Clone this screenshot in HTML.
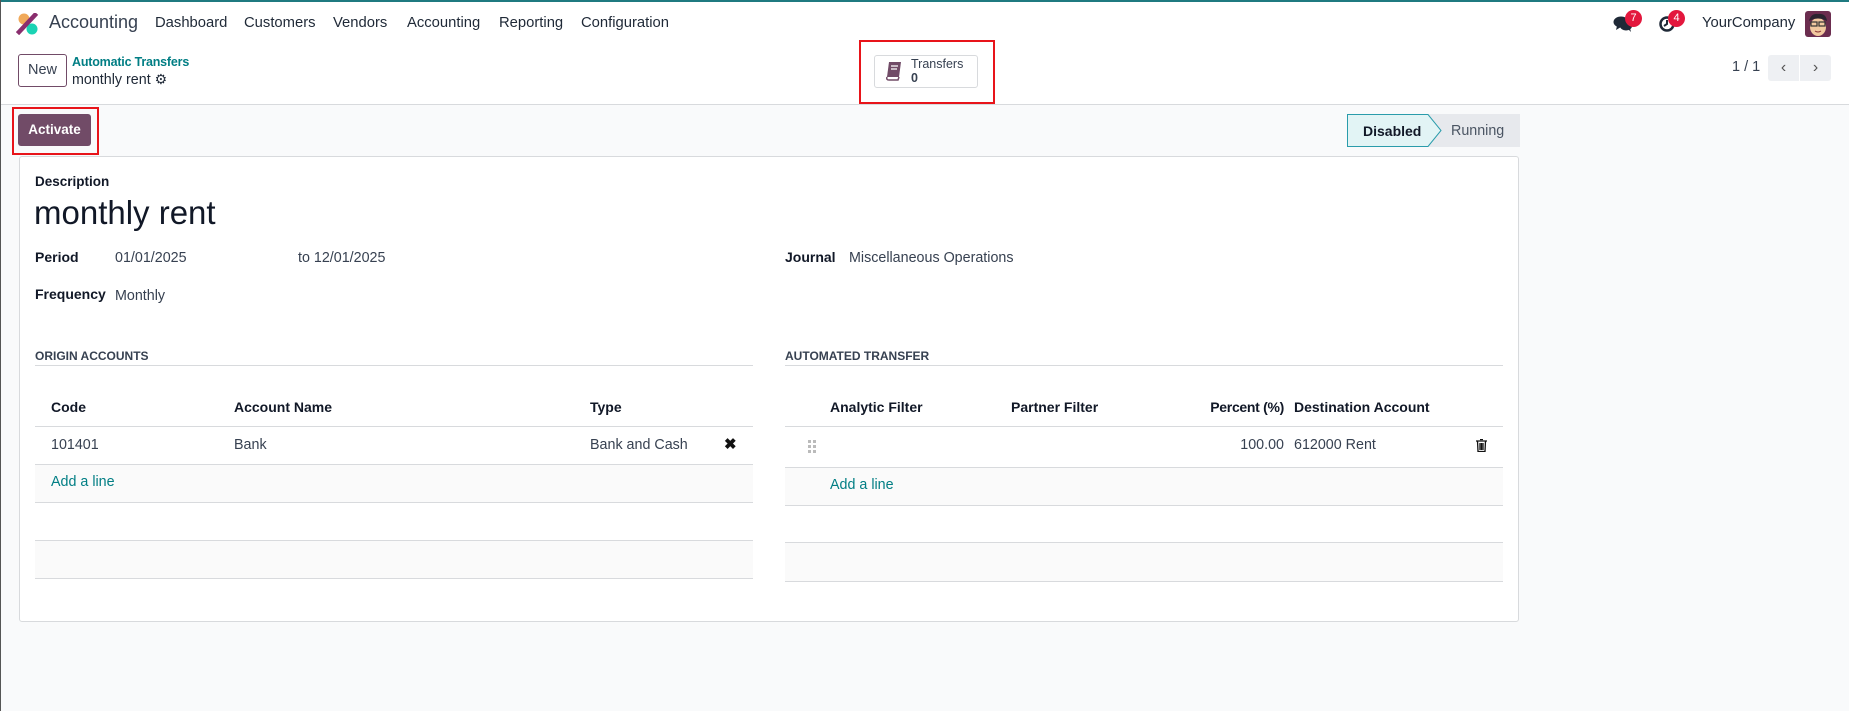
<!DOCTYPE html>
<html><head><meta charset="utf-8"><style>
*{box-sizing:border-box;margin:0;padding:0}
body{width:1849px;height:711px;overflow:hidden;background:#f9fafb;font-family:"Liberation Sans",sans-serif;color:#374151;position:relative;border-left:1px solid #555}
.a{position:absolute;white-space:nowrap}
.top{position:absolute;left:0;top:0;width:1849px;height:105px;background:#fff;border-top:2px solid #1f7a80;border-bottom:1px solid #d8dadd}
.nav{font-size:14.8px;color:#1f2937;top:15px}
.card{position:absolute;left:18px;top:156px;width:1500px;height:466px;background:#fff;border:1px solid #d8dadd;border-radius:3px}
.lbl{font-weight:bold;color:#111827;font-size:14px}
.val{font-size:14.3px;color:#374151}
.sec{font-weight:bold;font-size:12px;color:#374151}
.hl{position:absolute;height:1px;background:#d8dadd}
.th{font-weight:bold;font-size:14px;color:#111827}
.td{font-size:14.3px;color:#374151}
.add{font-size:14.3px;color:#017e84}
.band{position:absolute;background:#fafafa}
.badge{position:absolute;width:17px;height:17px;border-radius:50%;background:#e3173d;color:#fff;font-size:11px;text-align:center;line-height:17px}
</style></head><body>
<div class="top"></div>
<svg class="a" style="left:15px;top:13px" width="24" height="22" viewBox="0 0 24 22"><circle cx="8" cy="6" r="5.5" fill="#f0a95a"/><circle cx="16" cy="16" r="5.5" fill="#1ad3b4"/><path d="M3 19 L19 2" stroke="#8a2e6e" stroke-width="4.5" stroke-linecap="square"/></svg>
<div class="a" style="left:48px;top:12px;font-size:18px;color:#374151">Accounting</div>
<div class="a nav" style="left:154px">Dashboard</div>
<div class="a nav" style="left:243px">Customers</div>
<div class="a nav" style="left:332px">Vendors</div>
<div class="a nav" style="left:406px">Accounting</div>
<div class="a nav" style="left:498px">Reporting</div>
<div class="a nav" style="left:580px">Configuration</div>
<svg class="a" style="left:1612px;top:15px" width="20" height="18" viewBox="0 0 20 18"><ellipse cx="8" cy="7" rx="7.5" ry="5.5" fill="#1f2937"/><path d="M4 11 L3 15 L8 12Z" fill="#1f2937"/><ellipse cx="13" cy="11" rx="6" ry="4.5" fill="#1f2937"/><path d="M15 14 L18 17 L17 13Z" fill="#1f2937"/></svg>
<div class="badge" style="left:1624px;top:10px">7</div>
<svg class="a" style="left:1657px;top:15px" width="18" height="18" viewBox="0 0 18 18"><circle cx="9" cy="9" r="6.5" fill="none" stroke="#1f2937" stroke-width="2.5"/><path d="M9 5 V9 L6 11" stroke="#1f2937" stroke-width="2" fill="none"/></svg>
<div class="badge" style="left:1667px;top:10px">4</div>
<div class="a" style="left:1701px;top:15px;font-size:14.8px;color:#1f2937">YourCompany</div>
<svg class="a" style="left:1804px;top:11px" width="26" height="26" viewBox="0 0 26 26"><rect width="26" height="26" rx="3" fill="#6b2d4f"/><ellipse cx="13" cy="16" rx="8" ry="9" fill="#f2c9a0"/><path d="M4 10 Q6 2 13 3 Q21 2 22 10 L20 9 Q13 6 6 9Z" fill="#2a2430"/><rect x="6" y="11" width="6" height="4" fill="none" stroke="#333" stroke-width="1.2"/><rect x="14" y="11" width="6" height="4" fill="none" stroke="#333" stroke-width="1.2"/><path d="M10 20 Q13 22 16 20" stroke="#833" fill="none"/></svg>
<div class="a" style="left:17px;top:54px;width:49px;height:33px;border:1px solid #714b67;border-radius:3px;font-size:14.5px;color:#374151;text-align:center;line-height:31px">New</div>
<div class="a" style="left:71px;top:55px;font-size:12.5px;font-weight:bold;color:#017e84;letter-spacing:-0.2px">Automatic Transfers</div>
<div class="a" style="left:71px;top:71px;font-size:14.3px;color:#1f2937">monthly rent <span style="font-size:14px">⚙</span></div>
<div class="a" style="left:858px;top:40px;width:136px;height:64px;border:2px solid #e8141a"></div>
<div class="a" style="left:873px;top:55px;width:104px;height:33px;border:1px solid #d8dadd;border-radius:3px;background:#fff"></div>
<svg class="a" style="left:884px;top:61px" width="18" height="20" viewBox="0 0 18 20"><path d="M4 1 H16 L14 16 H2Z" fill="#714b67"/><path d="M2 16 Q1 19 4 19 H13 L14 16" fill="none" stroke="#714b67" stroke-width="1.5"/><path d="M6 5 H13 M6 8 H12" stroke="#fff" stroke-width="1.2"/></svg>
<div class="a" style="left:910px;top:57px;font-size:12.5px;color:#374151;line-height:14px">Transfers<br><span style="font-weight:bold">0</span></div>
<div class="a" style="left:1731px;top:59px;font-size:14.5px;color:#374151">1 / 1</div>
<div class="a" style="left:1767px;top:55px;width:31px;height:26px;background:#eef0f3;border-radius:3px 0 0 3px;text-align:center;line-height:26px;color:#555;font-size:16px">&#8249;</div>
<div class="a" style="left:1799px;top:55px;width:31px;height:26px;background:#eef0f3;border-radius:0 3px 3px 0;text-align:center;line-height:26px;color:#555;font-size:16px">&#8250;</div>
<div class="a" style="left:11px;top:107px;width:87px;height:48px;border:2px solid #e8141a"></div>
<div class="a" style="left:17px;top:114px;width:73px;height:32px;background:#714b67;border-radius:3px;color:#fff;font-weight:bold;font-size:13.5px;text-align:center;line-height:32px">Activate</div>
<svg class="a" style="left:1346px;top:114px" width="173" height="33" viewBox="0 0 173 33"><rect x="0" y="0" width="173" height="33" fill="#e7e9ed"/><path d="M0.5 0.5 H81 L94 16.5 L81 32.5 H0.5Z" fill="#e2f4f5" stroke="#2a9cab"/></svg>
<div class="a" style="left:1362px;top:123px;font-size:14px;font-weight:bold;color:#111827">Disabled</div>
<div class="a" style="left:1450px;top:123px;font-size:14.3px;color:#4b5563">Running</div>
<div class="card"></div>
<div class="a lbl" style="left:34px;top:174px;font-size:13.5px">Description</div>
<div class="a" style="left:33px;top:194px;font-size:33px;color:#111827">monthly rent</div>
<div class="a lbl" style="left:34px;top:249px">Period</div>
<div class="a val" style="left:114px;top:250px">01/01/2025</div>
<div class="a val" style="left:297px;top:250px">to 12/01/2025</div>
<div class="a lbl" style="left:784px;top:249px">Journal</div>
<div class="a val" style="left:848px;top:250px">Miscellaneous Operations</div>
<div class="a lbl" style="left:34px;top:286px">Frequency</div>
<div class="a val" style="left:114px;top:288px">Monthly</div>
<div class="a sec" style="left:34px;top:349px">ORIGIN ACCOUNTS</div>
<div class="hl" style="left:34px;top:365px;width:718px"></div>
<div class="a sec" style="left:784px;top:349px">AUTOMATED TRANSFER</div>
<div class="hl" style="left:784px;top:365px;width:718px"></div>
<div class="a th" style="left:50px;top:399px">Code</div>
<div class="a th" style="left:233px;top:399px">Account Name</div>
<div class="a th" style="left:589px;top:399px">Type</div>
<div class="hl" style="left:34px;top:426px;width:718px"></div>
<div class="a td" style="left:50px;top:437px">101401</div>
<div class="a td" style="left:233px;top:437px">Bank</div>
<div class="a td" style="left:589px;top:437px">Bank and Cash</div>
<div class="a" style="left:723px;top:435px;font-size:15px;font-weight:bold;color:#111">✖</div>
<div class="hl" style="left:34px;top:464px;width:718px"></div>
<div class="band" style="left:34px;top:465px;width:718px;height:37px"></div>
<div class="a add" style="left:50px;top:474px">Add a line</div>
<div class="hl" style="left:34px;top:502px;width:718px"></div>
<div class="hl" style="left:34px;top:540px;width:718px"></div>
<div class="band" style="left:34px;top:541px;width:718px;height:37px"></div>
<div class="hl" style="left:34px;top:578px;width:718px"></div>
<div class="a th" style="left:829px;top:399px">Analytic Filter</div>
<div class="a th" style="left:1010px;top:399px">Partner Filter</div>
<div class="a th" style="left:1183px;top:399px;width:100px;text-align:right;letter-spacing:-0.3px">Percent (%)</div>
<div class="a th" style="left:1293px;top:399px">Destination Account</div>
<div class="hl" style="left:784px;top:426px;width:718px"></div>
<svg class="a" style="left:807px;top:440px" width="9" height="14" viewBox="0 0 9 14"><g fill="#bbb"><rect x="0" y="0" width="3" height="3"/><rect x="5" y="0" width="3" height="3"/><rect x="0" y="5" width="3" height="3"/><rect x="5" y="5" width="3" height="3"/><rect x="0" y="10" width="3" height="3"/><rect x="5" y="10" width="3" height="3"/></g></svg>
<div class="a td" style="left:1200px;top:437px;width:83px;text-align:right">100.00</div>
<div class="a td" style="left:1293px;top:437px">612000 Rent</div>
<svg class="a" style="left:1475px;top:439px" width="11" height="13" viewBox="0 0 11 13"><path d="M0 2 H11 M4 0.5 H7 M1.5 2 L2 12.5 H9 L9.5 2 M4 4 V11 M5.5 4 V11 M7 4 V11" stroke="#111" stroke-width="1.3" fill="none"/></svg>
<div class="hl" style="left:784px;top:467px;width:718px"></div>
<div class="band" style="left:784px;top:468px;width:718px;height:37px"></div>
<div class="a add" style="left:829px;top:477px">Add a line</div>
<div class="hl" style="left:784px;top:505px;width:718px"></div>
<div class="hl" style="left:784px;top:542px;width:718px"></div>
<div class="band" style="left:784px;top:543px;width:718px;height:38px"></div>
<div class="hl" style="left:784px;top:581px;width:718px"></div>
</body></html>
